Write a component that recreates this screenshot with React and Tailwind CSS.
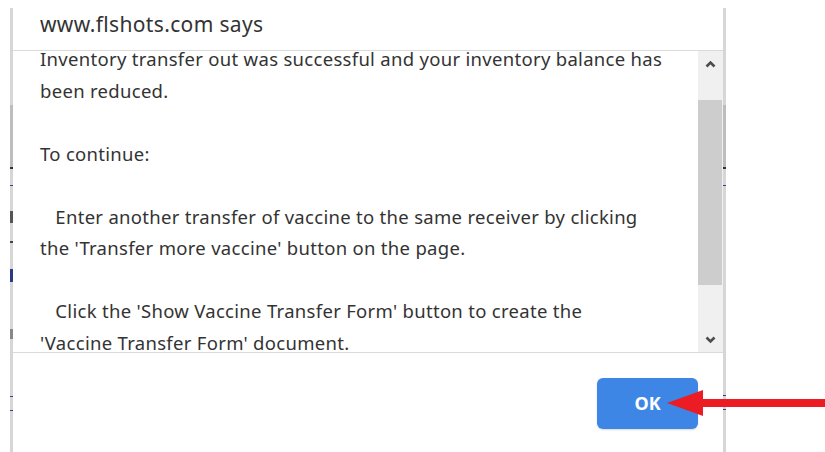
import React from "react";

// Visual lines of the alert message, as the dialog wraps them.
const lines = [
  "Inventory transfer out was successful and your inventory balance has",
  "been reduced.",
  "",
  "To continue:",
  "",
  "   Enter another transfer of vaccine to the same receiver by clicking",
  "the 'Transfer more vaccine' button on the page.",
  "",
  "   Click the 'Show Vaccine Transfer Form' button to create the",
  "'Vaccine Transfer Form' document.",
  "",
  "   Click the 'Print Transfer Confirmation' button to print a copy of",
  "this page.",
];

function Chevron({ up }) {
  return (
    <svg width="11" height="8" viewBox="0 0 11 8">
      <polyline
        points={up ? "1.5,6.5 5.5,2.5 9.5,6.5" : "1.5,1.5 5.5,5.5 9.5,1.5"}
        fill="none"
        stroke="#4d4d4d"
        strokeWidth="2.6"
      />
    </svg>
  );
}

// Window frame edges, with slivers of the page behind showing through.
function LeftEdge() {
  return (
    <div className="w-[3px] shrink-0 flex flex-col bg-[#d6d6d6]">
      <div className="h-[97px]" />
      <div className="h-[62px] bg-[#bdbdbd]" />
      <div className="h-[2px] bg-[#333]" />
      <div className="h-[16px]" />
      <div className="h-[1px] bg-[#3a3aa0]" />
      <div className="h-[25px]" />
      <div className="h-[12px] bg-[#555]" />
      <div className="h-[18px]" />
      <div className="h-[2px] bg-[#444]" />
      <div className="h-[26px]" />
      <div className="h-[13px] bg-[#2a3a8a]" />
      <div className="h-[47px]" />
      <div className="h-[10px] bg-[#888]" />
      <div className="h-[57px]" />
      <div className="h-[1px] bg-[#3a3aa0]" />
      <div className="h-[13px]" />
      <div className="h-[1px] bg-[#3a3aa0]" />
    </div>
  );
}

function RightEdge() {
  return (
    <div className="w-[3px] shrink-0 flex flex-col bg-[#d6d6d6]">
      <div className="h-[97px]" />
      <div className="h-[62px] bg-[#bdbdbd]" />
      <div className="h-[2px] bg-[#333]" />
      <div className="h-[16px]" />
      <div className="h-[1px] bg-[#3a3aa0]" />
      <div className="h-[209px]" />
      <div className="h-[1px] bg-[#3a3aa0]" />
      <div className="h-[13px]" />
      <div className="h-[1px] bg-[#3a3aa0]" />
    </div>
  );
}

export default function App() {
  return (
    <div
      className="relative w-[825px] h-[452px] overflow-hidden bg-white"
      style={{ fontFamily: '"Noto Sans", "Open Sans", sans-serif' }}
    >
      {/* alert dialog */}
      <div className="ml-[10px] mt-[8px] w-[716px] h-[444px] flex">
        <LeftEdge />
        <div className="flex-1 flex flex-col min-w-0">
          <div className="h-[43px] shrink-0 border-b border-[#dadada] pl-[27px] pt-[1px] text-[21px] leading-[30px] tracking-[0.35px] text-[#333]">
            www.flshots.com says
          </div>
          <div className="h-[302px] shrink-0 flex border-b border-[#dadada]">
            <div className="flex-1 overflow-hidden pl-[27px]">
              <div className="-mt-[8px] whitespace-pre text-[18.5px] leading-[31.5px] tracking-[0.3px] text-[#333]">
                {lines.map((line, i) => (
                  <div key={i} className="h-[31.5px]">
                    {line}
                  </div>
                ))}
              </div>
            </div>
            <div className="w-[25px] shrink-0 flex flex-col bg-[#f0f0f0]">
              <div className="h-[22px] flex items-center justify-center pt-[4px]">
                <Chevron up />
              </div>
              <div className="mt-[27px] h-[185px] mr-[1px] bg-[#cdcdcd]" />
              <div className="flex-1 flex items-end justify-center pb-[8px]">
                <Chevron />
              </div>
            </div>
          </div>
          <div className="flex-1 flex justify-end pt-[25px] pr-[25px]">
            <button className="w-[101px] h-[51px] rounded-[6px] bg-[#3d86e6] text-white text-[18px] font-bold shadow-[0_1px_2px_rgba(0,0,0,0.15)]">
              OK
            </button>
          </div>
        </div>
        <RightEdge />
      </div>

      {/* red pointer arrow aimed at the OK button */}
      <svg
        className="absolute left-[666px] top-[388px]"
        width="159"
        height="30"
        viewBox="0 0 159 30"
      >
        <polygon points="1,15 37,2 37,28" fill="#ec1c24" />
        <rect x="36" y="11" width="123" height="8" fill="#ec1c24" />
      </svg>
    </div>
  );
}
